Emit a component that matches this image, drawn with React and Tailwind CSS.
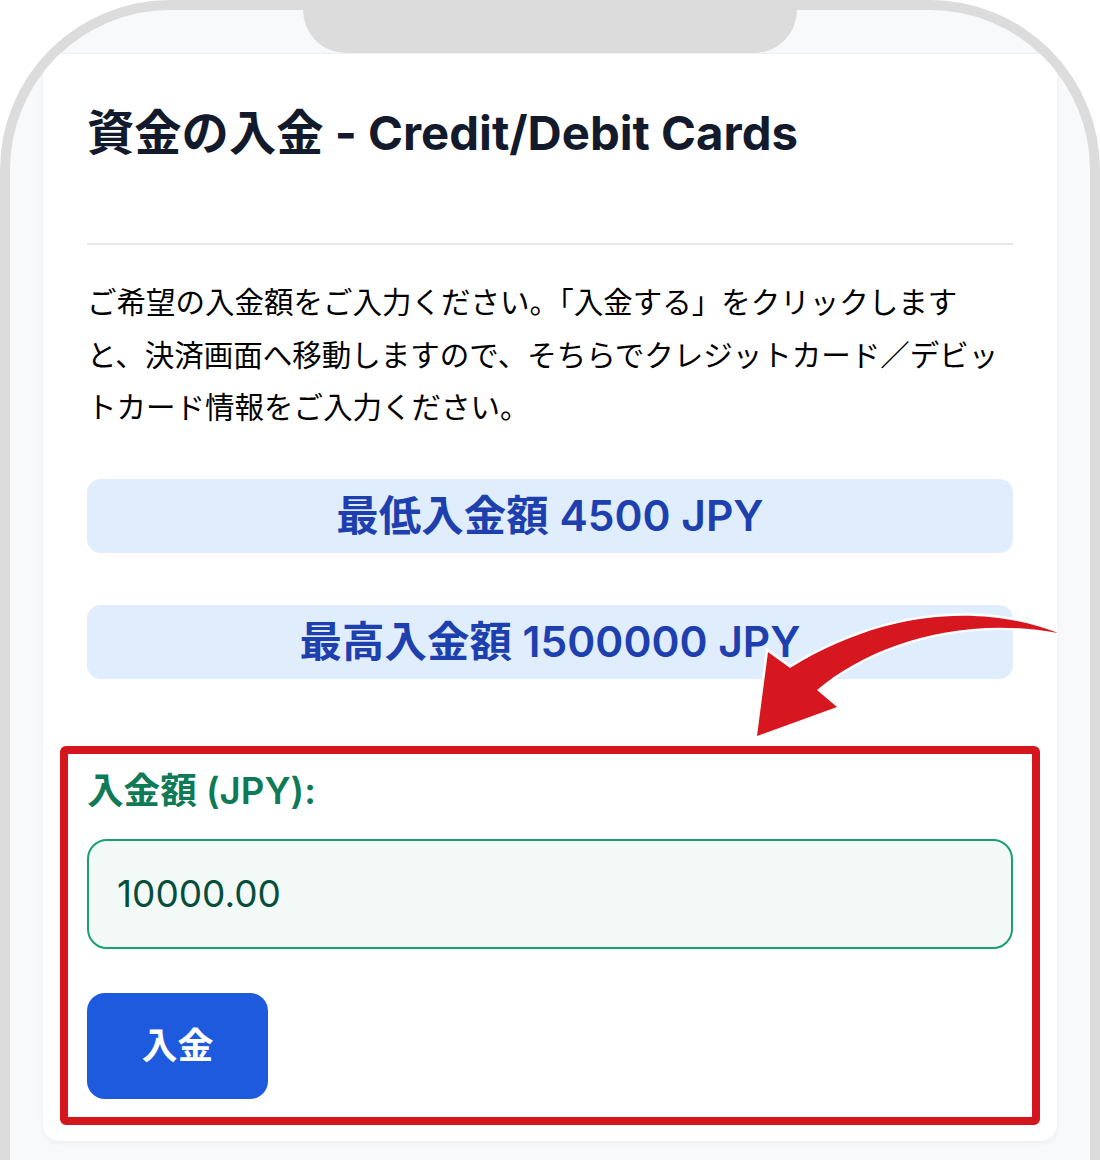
import React from 'react';

const cjk = "font-['Inter','Noto_Sans_CJK_JP',sans-serif]";

// Red curved pointer drawn over the page, aimed at the deposit form
const PointerArrow = () => (
  <svg
    className="pointer-events-none absolute left-0 top-0"
    width="1100"
    height="1160"
    viewBox="0 0 1100 1160"
  >
    <path
      d="M1058 633 C 1000 610, 900 600, 790 668 L 768 652 L 757 736 L 837 707 L 817 690 C 870 645, 960 615, 1058 633 Z"
      fill="#d6171f"
      stroke="#ffffff"
      strokeWidth="5"
      strokeLinejoin="miter"
      paintOrder="stroke"
    />
  </svg>
);

const LimitBox = ({ children }) => (
  <div
    className={`flex h-[74px] items-center justify-center rounded-[14px] bg-[#dfedfd] text-[42.5px] font-semibold text-[#1e40af] ${cjk}`}
  >
    {children}
  </div>
);

const App = () => {
  return (
    <div className="relative h-[1160px] w-[1100px] overflow-hidden bg-white">
      <div className="relative h-[1160px] overflow-hidden rounded-t-[170px] border-x-[10px] border-t-[10px] border-[#dcdcdc] bg-[#f8f9fb] px-[33px] pt-[43px]">
        {/* notch */}
        <div className="absolute left-[293px] top-0 h-[43px] w-[494px] rounded-b-[50px] bg-[#dcdcdc]" />

        <div className="rounded-b-2xl border-t border-[#eef0f3] bg-white px-11 pb-[42px] pt-11 shadow-[0_2px_6px_rgba(0,0,0,0.05)]">
          <h1 className={`text-[47.3px] font-bold leading-[70px] text-[#131a2b] ${cjk}`}>
            資金の入金 - Credit/Debit Cards
          </h1>

          <div className="mt-[75px] h-[2px] bg-[#e5e7eb]" />

          <p className="mt-[29px] font-['Noto_Sans_CJK_JP',sans-serif] text-[29.5px] leading-[52.5px] text-black">
            ご希望の入金額をご入力ください。「入金する」をクリックしますと、決済画面へ移動しますので、そちらでクレジットカード／デビットカード情報をご入力ください。
          </p>

          <div className="mt-[47px] flex flex-col gap-[52px]">
            <LimitBox>最低入金額 4500 JPY</LimitBox>
            <LimitBox>最高入金額 1500000 JPY</LimitBox>
          </div>

          <div className="relative mt-[88px]">
            <div className="pointer-events-none absolute -bottom-[26px] -left-[27px] -right-[27px] -top-[21px] rounded-[6px] border-8 border-[#d4161f]" />

            <label className={`block text-[36.6px] font-semibold leading-[48px] text-[#0f7a56] ${cjk}`}>
              入金額 (JPY):
            </label>

            <input
              type="text"
              defaultValue="10000.00"
              className={`mt-[24px] block h-[110px] w-full rounded-[20px] border-2 border-[#1a9f73] bg-[#f3f9f7] px-[28px] text-[37px] text-[#064e3b] outline-none ${cjk}`}
            />

            <button
              className={`mt-[44px] flex h-[106px] w-[181px] items-center justify-center rounded-[18px] bg-[#1d5ade] text-[36px] font-bold text-white ${cjk}`}
            >
              入金
            </button>
          </div>
        </div>
      </div>

      <PointerArrow />
    </div>
  );
};

export default App;
